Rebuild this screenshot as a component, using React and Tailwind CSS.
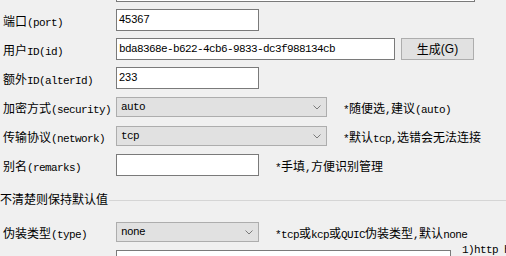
import React from "react";

const MONO = "font-['Liberation_Mono',monospace] text-[11px] tracking-[-0.6px]";
const CJK = "font-['Noto_Sans_CJK_SC',sans-serif] text-[12px]";

function T({ s, sans = false }) {
  const parts = s.match(/[\x00-\x7F]+|[^\x00-\x7F]+/g) || [];
  return parts.map((p, i) =>
    /^[\x00-\x7F]/.test(p) ? (
      <span
        key={i}
        className={
          sans
            ? "font-['Liberation_Sans',sans-serif] text-[12px]"
            : MONO
        }
      >
        {p}
      </span>
    ) : (
      <span key={i} className={CJK}>
        {p}
      </span>
    )
  );
}

function Label({ s }) {
  return (
    <div className="w-[116px] shrink-0 whitespace-nowrap pl-[3px] leading-[22px] text-black">
      <T s={s} />
    </div>
  );
}

function Hint({ s, ml = "ml-[16px]" }) {
  return (
    <div className={`${ml} whitespace-nowrap leading-[22px] text-black`}>
      <T s={s} />
    </div>
  );
}

function Input({ value, w, sans = false }) {
  return (
    <div
      className={`${w} h-[22px] shrink-0 overflow-hidden whitespace-nowrap border border-[#7a7a7a] bg-white pl-[2px] leading-[14px] text-black`}
    >
      {sans ? (
        <span className="font-['Liberation_Sans',sans-serif] text-[11px]">{value}</span>
      ) : (
        <span className={MONO}>{value}</span>
      )}
    </div>
  );
}

function Select({ value, w }) {
  return (
    <div
      className={`${w} mt-[1px] flex h-[20px] shrink-0 items-center justify-between border border-[#adadad] bg-[#e1e1e1] pl-[4px] pr-[5px] text-black`}
    >
      <span className={`${MONO} leading-[17px] pt-[1px]`}>{value}</span>
      <svg width="8" height="5" viewBox="0 0 8 5" className="mt-[1px]">
        <polyline
          points="0.5,0.5 4,4 7.5,0.5"
          fill="none"
          stroke="#7a7a7a"
          strokeWidth="1"
        />
      </svg>
    </div>
  );
}

function Row({ children }) {
  return <div className="flex h-[29px] shrink-0 items-start">{children}</div>;
}

export default function App() {
  return (
    <div className="flex h-[256px] w-[506px] flex-col overflow-hidden bg-[#f0f0f0]">
      <div className="-mt-[20px] flex h-[29px] shrink-0 items-start">
        <div className="w-[116px] shrink-0" />
        <Input value="" w="w-[359px]" />
      </div>
      <Row>
        <Label s="端口(port)" />
        <Input value="45367" w="w-[143px]" sans />
      </Row>
      <Row>
        <Label s="用户ID(id)" />
        <Input value="bda8368e-b622-4cb6-9833-dc3f988134cb" w="w-[279px]" />
        <button className="ml-[6px] flex h-[22px] w-[73px] shrink-0 items-center justify-center border border-[#adadad] bg-[#e1e1e1] leading-[20px] text-black">
          <T s="生成(G)" sans />
        </button>
      </Row>
      <Row>
        <Label s="额外ID(alterId)" />
        <Input value="233" w="w-[143px]" sans />
      </Row>
      <Row>
        <Label s="加密方式(security)" />
        <Select value="auto" w="w-[211px]" />
        <Hint s="*随便选,建议(auto)" />
      </Row>
      <Row>
        <Label s="传输协议(network)" />
        <Select value="tcp" w="w-[211px]" />
        <Hint s="*默认tcp,选错会无法连接" />
      </Row>
      <Row>
        <Label s="别名(remarks)" />
        <Input value="" w="w-[143px]" />
        <Hint s="*手填,方便识别管理" />
      </Row>
      <div className="mt-[8px] flex h-[14px] shrink-0 items-start">
        <div className="whitespace-nowrap leading-[14px] text-black">
          <T s="不清楚则保持默认值" />
        </div>
        <div className="ml-[1px] mt-[9px] h-px flex-1 bg-[#d5d5d5]" />
      </div>
      <div className="mt-[16px] flex h-[29px] shrink-0 items-start">
        <Label s="伪装类型(type)" />
        <Select value="none" w="w-[143px]" />
        <Hint s="*tcp或kcp或QUIC伪装类型,默认none" />
      </div>
      <Row>
        <Label s="伪装域名(host)" />
        <Input value="" w="w-[335px]" />
        <div className="ml-[11px] -mt-[10px] whitespace-nowrap leading-[14px] text-black">
          <span className={MONO}>1)http host</span>
        </div>
      </Row>
    </div>
  );
}
